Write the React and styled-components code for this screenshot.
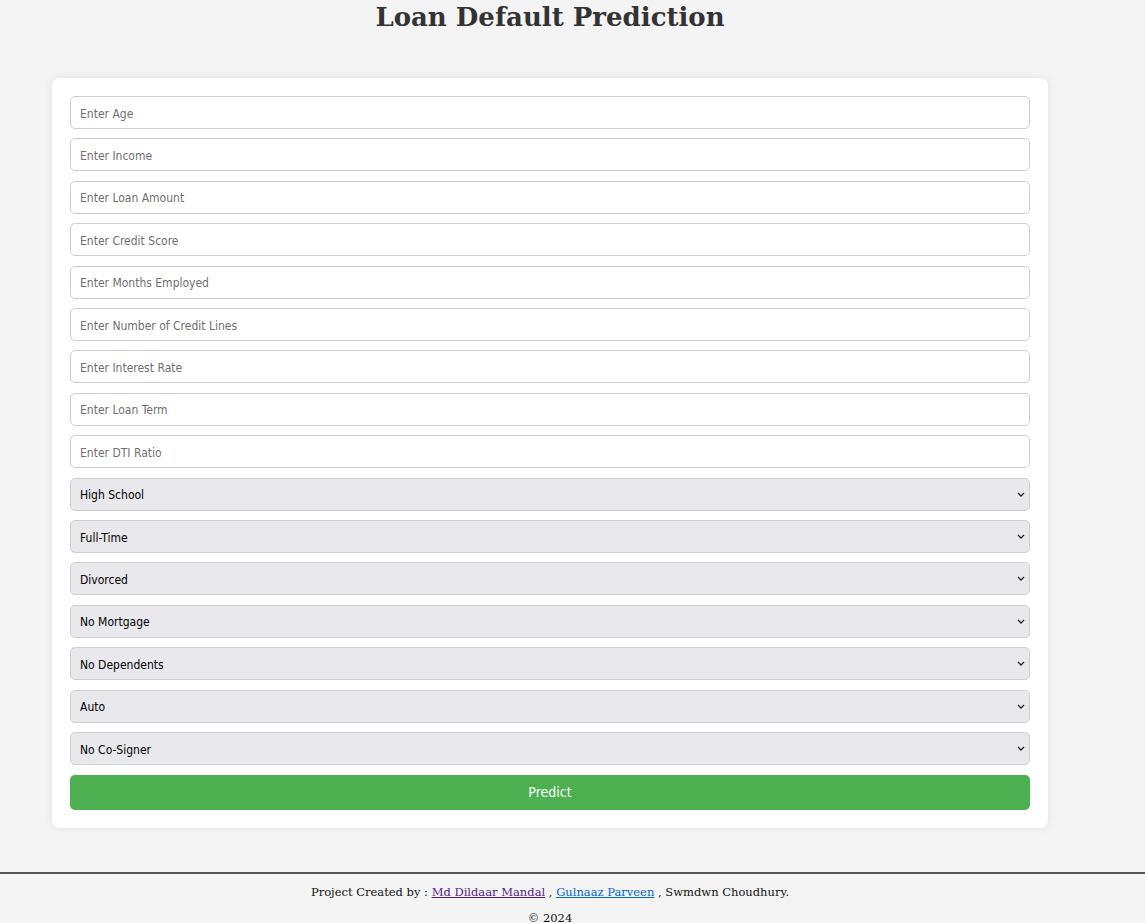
import React from 'react';
import styled, { createGlobalStyle } from 'styled-components';

const GlobalStyle = createGlobalStyle`
  html, body {
    margin: 0;
    padding: 0;
    background: #f4f4f4;
  }
  body {
    font-family: "DejaVu Serif", Georgia, serif;
  }
`;

const Page = styled.div`
  width: 1100px;
`;

const Title = styled.h1`
  margin: 0;
  padding-top: 1px;
  text-align: center;
  font-family: "DejaVu Serif", Georgia, serif;
  font-size: 26px;
  line-height: 32px;
  font-weight: bold;
  color: #333;
`;

const Card = styled.form`
  margin: 45px 52px 44px;
  background: #fff;
  border-radius: 8px;
  padding: 18px;
  box-shadow: 0 0 10px rgba(0, 0, 0, 0.08);
  display: flex;
  flex-direction: column;
  gap: 9.42px;
`;

const Input = styled.input`
  box-sizing: border-box;
  width: 100%;
  height: 33px;
  margin: 0;
  padding: 2px 9px 0;
  border: 1px solid #cfcfcf;
  border-radius: 5px;
  background: #fff;
  font-family: "DejaVu Sans Condensed", "DejaVu Sans", sans-serif;
  font-size: 12px;
  color: #222;

  &::placeholder {
    color: #6f6f6f;
  }
`;

const SelectWrap = styled.div`
  position: relative;
`;

const Select = styled.select`
  box-sizing: border-box;
  width: 100%;
  height: 33px;
  margin: 0;
  padding: 2px 9px 0;
  appearance: none;
  border: 1px solid #cfcfcf;
  border-radius: 5px;
  background: #e9e8ed;
  font-family: "DejaVu Sans Condensed", "DejaVu Sans", sans-serif;
  font-size: 12px;
  color: #000;
`;

const Chevron = styled.svg`
  position: absolute;
  right: 5px;
  top: 14px;
  width: 8px;
  height: 5px;
  pointer-events: none;
`;

const Button = styled.button`
  height: 35px;
  border: none;
  border-radius: 5px;
  background: #4caf50;
  color: #fff;
  font-family: "DejaVu Sans Condensed", "DejaVu Sans", sans-serif;
  font-size: 14px;
  cursor: pointer;
`;

const Footer = styled.footer`
  width: 1145px;
  border-top: 2px solid #555;
  padding-top: 10px;
`;

const FooterInner = styled.div`
  width: 1100px;
  text-align: center;
  font-size: 11.5px;
  color: #111;
`;

const Credit = styled.p`
  margin: 0 0 9px;
  line-height: 17px;
`;

const Copy = styled.p`
  margin: 0;
  line-height: 17px;
`;

const Link = styled.a`
  color: ${p => (p.$visited ? '#551a8b' : '#0066cc')};
`;

const inputs = [
  'Enter Age',
  'Enter Income',
  'Enter Loan Amount',
  'Enter Credit Score',
  'Enter Months Employed',
  'Enter Number of Credit Lines',
  'Enter Interest Rate',
  'Enter Loan Term',
  'Enter DTI Ratio',
];

const selects = [
  ['High School', "Bachelor's", "Master's", 'PhD'],
  ['Full-Time', 'Part-Time', 'Self-Employed', 'Unemployed'],
  ['Divorced', 'Married', 'Single'],
  ['No Mortgage', 'Has Mortgage'],
  ['No Dependents', 'Has Dependents'],
  ['Auto', 'Business', 'Education', 'Home', 'Other'],
  ['No Co-Signer', 'Has Co-Signer'],
];

export default function App() {
  return (
    <>
      <GlobalStyle />
      <Page>
        <Title>Loan Default Prediction</Title>
        <Card onSubmit={e => e.preventDefault()}>
          {inputs.map(p => (
            <Input key={p} type="text" placeholder={p} />
          ))}
          {selects.map(opts => (
            <SelectWrap key={opts[0]}>
              <Select defaultValue={opts[0]}>
                {opts.map(o => (
                  <option key={o} value={o}>{o}</option>
                ))}
              </Select>
              <Chevron viewBox="0 0 8 5">
                <path d="M1 1 L4 4 L7 1" fill="none" stroke="#222" strokeWidth="1.3" />
              </Chevron>
            </SelectWrap>
          ))}
          <Button type="submit">Predict</Button>
        </Card>
      </Page>
      <Footer>
        <FooterInner>
          <Credit>
            Project Created by : <Link $visited href="#">Md Dildaar Mandal</Link> ,{' '}
            <Link href="#">Gulnaaz Parveen</Link> , Swmdwn Choudhury.
          </Credit>
          <Copy>© 2024</Copy>
        </FooterInner>
      </Footer>
    </>
  );
}
